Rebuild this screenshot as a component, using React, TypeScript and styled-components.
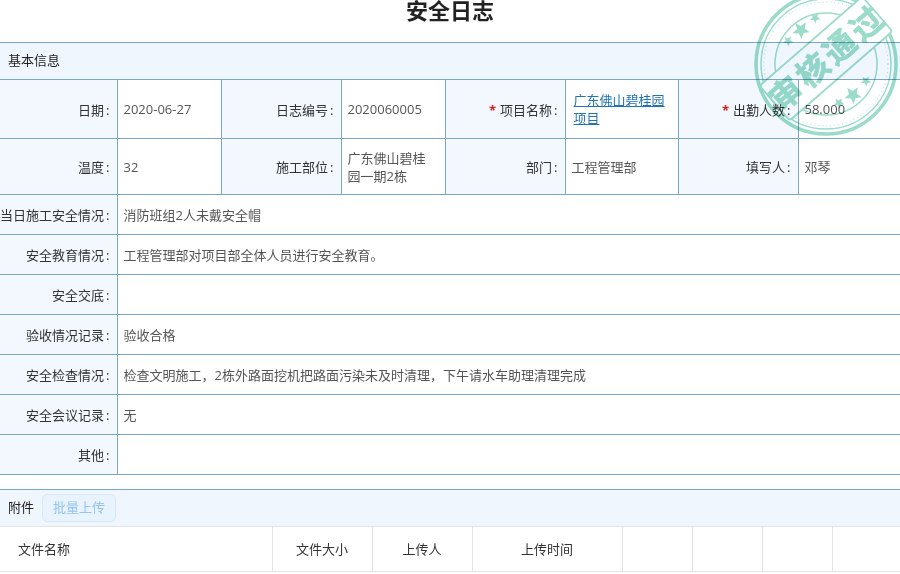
import styled, { createGlobalStyle } from "styled-components";

const GlobalStyle = createGlobalStyle`
    html, body {
        margin: 0;
        padding: 0;
        background: #fff;
        overflow: hidden;
    }
    body {
        font-family: "Open Sans", "Noto Sans CJK SC", sans-serif;
        font-size: 13px;
        color: #333;
    }
`;

const Page = styled.div`
    position: relative;
    width: 900px;
    height: 574px;
    overflow: hidden;
`;

const Title = styled.h1`
    margin: 0;
    height: 42px;
    line-height: 24px;
    font-family: "Liberation Sans", "Noto Sans CJK SC", sans-serif;
    font-size: 22px;
    font-weight: 700;
    text-align: center;
    color: #222;
`;

const SectionBar = styled.div`
    display: flex;
    align-items: center;
    box-sizing: border-box;
    height: 37px;
    padding: 0 0 3px 8px;
    background: #f0f6fe;
    border-top: 1px solid #7ba7c4;
    color: #222;
`;

const InfoTable = styled.table`
    width: 900px;
    table-layout: fixed;
    border-collapse: collapse;
    margin-bottom: 14px;
`;

const InfoRow = styled.tr<{ $height: number }>`
    height: ${(p) => p.$height}px;
`;

const Label = styled.th`
    padding: 0 7px 0 0;
    background: #f2f8fe;
    border: 1px solid #7ba7c4;
    border-left: 0;
    font-weight: 400;
    text-align: right;
    color: #333;
    white-space: nowrap;
`;

const Colon = styled.span`
    margin-left: 2px;
`;

const Value = styled.td`
    padding: 0 8px 0 6px;
    border: 1px solid #7ba7c4;
    color: #555;
    line-height: 18px;
    &:last-child {
        border-right: 0;
    }
`;

const Required = styled.span`
    color: #d81e1e;
    font-weight: 700;
    margin-right: 4px;
`;

const ProjectLink = styled.a`
    display: block;
    padding-left: 2px;
    color: #1f74b5;
    text-decoration: underline;
`;

const AttachBar = styled(SectionBar)`
    gap: 8px;
`;

const UploadButton = styled.button`
    width: 74px;
    height: 28px;
    margin-top: 3px;
    padding: 0 0 3px;
    background: #e8f3fd;
    border: 1px solid #d5e8f8;
    border-radius: 5px;
    color: #94c5ee;
    font: inherit;
`;

const FileTable = styled.table`
    width: 900px;
    table-layout: fixed;
    border-collapse: collapse;
`;

const FileHead = styled.th<{ $left?: boolean }>`
    box-sizing: border-box;
    height: 45px;
    padding: ${(p) => (p.$left ? "0 0 2px 18px" : "0 0 2px")};
    border: 1px solid #e3e3e3;
    border-left: 0;
    font-weight: 400;
    color: #333;
    text-align: ${(p) => (p.$left ? "left" : "center")};
    &:last-child {
        border-right: 0;
    }
`;

const Stamp = styled.svg`
    position: absolute;
    left: 750px;
    top: -10px;
    pointer-events: none;
    mix-blend-mode: multiply;
`;

const stampColor = "#9adcc9";

function Star({ x, y, r }: { x: number; y: number; r: number }) {
    const pts = Array.from({ length: 10 }, (_, i) => {
        const a = (Math.PI / 5) * i - Math.PI / 2;
        const d = i % 2 === 0 ? r : r * 0.45;
        return `${x + d * Math.cos(a)},${y + d * Math.sin(a)}`;
    }).join(" ");
    return <polygon points={pts} fill={stampColor} transform={`rotate(-40 ${x} ${y})`} />;
}

function ApprovedStamp() {
    const cx = 76;
    const cy = 74;
    const bandY = 68.5;
    const bandRotate = `rotate(-41 ${cx} ${bandY})`;
    return (
        <Stamp width="150" height="150" viewBox="0 0 150 150">
            <mask id="stamp-rings">
                <rect width="150" height="150" fill="#fff" />
                <rect x={cx - 68} y={bandY - 23} width={136} height={46} fill="#000" transform={bandRotate} />
            </mask>
            <g mask="url(#stamp-rings)" fill="none" stroke={stampColor}>
                <circle cx={cx} cy={cy} r={70} strokeWidth="3.6" />
                <circle cx={cx} cy={cy} r={65} strokeWidth="1.4" />
                <circle cx={cx} cy={cy} r={62} strokeWidth="1" strokeDasharray="1 3" />
                <circle cx={cx} cy={cy} r={51} strokeWidth="1.5" />
            </g>
            <Star x={51} y={40} r={9} />
            <Star x={65} y={28} r={5.5} />
            <Star x={38} y={51} r={5.5} />
            <Star x={103} y={105} r={9} />
            <Star x={116} y={91} r={5.5} />
            <Star x={89} y={113} r={5.5} />
            <g transform={bandRotate}>
                <rect
                    x={cx - 68}
                    y={bandY - 23}
                    width={136}
                    height={46}
                    rx="3"
                    fill="none"
                    stroke={stampColor}
                    strokeWidth="1.8"
                />
                <text
                    x={cx + 2}
                    y={bandY + 12}
                    fill={stampColor}
                    stroke={stampColor}
                    strokeWidth="0.7"
                    fontSize="32"
                    fontWeight="700"
                    letterSpacing="3.5"
                    textAnchor="middle"
                    fontFamily='"Noto Sans CJK SC", sans-serif'
                >
                    审核通过
                </text>
            </g>
        </Stamp>
    );
}

const longRows = [
    { label: "当日施工安全情况", value: "消防班组2人未戴安全帽" },
    { label: "安全教育情况", value: "工程管理部对项目部全体人员进行安全教育。" },
    { label: "安全交底", value: "" },
    { label: "验收情况记录", value: "验收合格" },
    { label: "安全检查情况", value: "检查文明施工，2栋外路面挖机把路面污染未及时清理，下午请水车助理清理完成" },
    { label: "安全会议记录", value: "无" },
    { label: "其他", value: "" },
];

const fileColumns = [272, 100, 100, 150, 70, 70, 70, 68];

export default function App() {
    return (
        <Page>
            <GlobalStyle />
            <Title>安全日志</Title>
            <SectionBar>基本信息</SectionBar>
            <InfoTable>
                <colgroup>
                    <col width="117" />
                    <col width="104" />
                    <col width="120" />
                    <col width="104" />
                    <col width="120" />
                    <col width="113" />
                    <col width="120" />
                    <col width="102" />
                </colgroup>
                <tbody>
                    <InfoRow $height={59}>
                        <Label>
                            日期<Colon>:</Colon>
                        </Label>
                        <Value>2020-06-27</Value>
                        <Label>
                            日志编号<Colon>:</Colon>
                        </Label>
                        <Value>2020060005</Value>
                        <Label>
                            <Required>*</Required>项目名称<Colon>:</Colon>
                        </Label>
                        <Value>
                            <ProjectLink href="#">广东佛山碧桂园项目</ProjectLink>
                        </Value>
                        <Label>
                            <Required>*</Required>出勤人数<Colon>:</Colon>
                        </Label>
                        <Value>58.000</Value>
                    </InfoRow>
                    <InfoRow $height={56}>
                        <Label>
                            温度<Colon>:</Colon>
                        </Label>
                        <Value>32</Value>
                        <Label>
                            施工部位<Colon>:</Colon>
                        </Label>
                        <Value>广东佛山碧桂园一期2栋</Value>
                        <Label>
                            部门<Colon>:</Colon>
                        </Label>
                        <Value>工程管理部</Value>
                        <Label>
                            填写人<Colon>:</Colon>
                        </Label>
                        <Value>邓琴</Value>
                    </InfoRow>
                    {longRows.map((row) => (
                        <InfoRow $height={40} key={row.label}>
                            <Label>
                                {row.label}
                                <Colon>:</Colon>
                            </Label>
                            <Value colSpan={7}>{row.value}</Value>
                        </InfoRow>
                    ))}
                </tbody>
            </InfoTable>
            <AttachBar>
                附件
                <UploadButton>批量上传</UploadButton>
            </AttachBar>
            <FileTable>
                <colgroup>
                    {fileColumns.map((w, i) => (
                        <col width={w} key={i} />
                    ))}
                </colgroup>
                <thead>
                    <tr>
                        <FileHead $left>文件名称</FileHead>
                        <FileHead>文件大小</FileHead>
                        <FileHead>上传人</FileHead>
                        <FileHead>上传时间</FileHead>
                        <FileHead />
                        <FileHead />
                        <FileHead />
                        <FileHead />
                    </tr>
                </thead>
            </FileTable>
            <ApprovedStamp />
        </Page>
    );
}
